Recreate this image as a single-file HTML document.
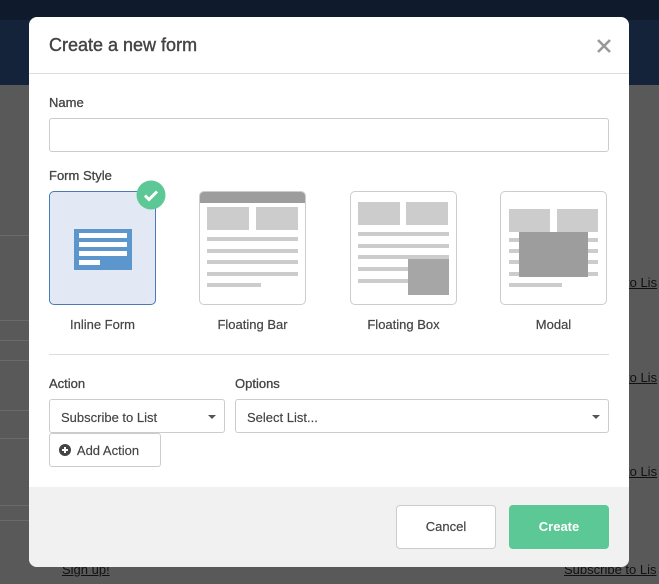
<!DOCTYPE html>
<html><head><style>
*{box-sizing:border-box;margin:0;padding:0}
body{width:659px;height:584px;overflow:hidden;position:relative;background:#595959;font-family:"Liberation Sans",sans-serif;}
.top{position:absolute;left:0;top:0;width:659px;height:85px;background:#14223a}
.top2{position:absolute;left:0;top:0;width:659px;height:20px;background:#0f1a2c}
.bgl{position:absolute;left:0;width:40px;height:1px;background:#6a6a6a}
.lnk{position:absolute;color:#111;font-size:13px;text-decoration:underline}
.modal{position:absolute;left:29px;top:17px;width:600px;height:550px;background:#fff;border-radius:8px;overflow:hidden}
.hdr{height:57px;border-bottom:1px solid #ddd;position:relative}
.hdr h1{position:absolute;left:20px;top:18px;font-size:18px;font-weight:normal;color:#444;-webkit-text-stroke:.4px #444}
.x{position:absolute;left:567px;top:21px}
.lbl{position:absolute;font-size:13px;color:#444;-webkit-text-stroke:.3px #444}
.inp{position:absolute;border:1px solid #ccc;border-radius:3px;background:#fff}
.card{position:absolute;top:174px;width:107px;height:114px;border:1px solid #ccc;border-radius:5px;background:#fff;overflow:hidden}
.cl{position:absolute;top:300px;font-size:13px;color:#444;text-align:center;width:107px;-webkit-text-stroke:.2px #444}
.g{position:absolute;background:#ccc}
.d{position:absolute;background:#9d9d9d}
.footer{position:absolute;left:0;top:470px;width:600px;height:80px;background:#f1f1f1}
.sel{font-size:13px;color:#444;padding:10px 11px;-webkit-text-stroke:.15px #444}
.caret{position:absolute;right:8px;top:15px;border-left:4px solid transparent;border-right:4px solid transparent;border-top:4px solid #555}
</style></head><body>
<div class="top"></div><div class="top2"></div>
<div class="bgl" style="top:235px"></div><div class="bgl" style="top:320px"></div><div class="bgl" style="top:340px"></div><div class="bgl" style="top:360px"></div><div class="bgl" style="top:410px"></div><div class="bgl" style="top:438px"></div><div class="bgl" style="top:505px"></div><div class="bgl" style="top:520px"></div>
<div class="lnk" style="left:626px;top:275px">to Lis</div>
<div class="lnk" style="left:626px;top:370px">to Lis</div>
<div class="lnk" style="left:626px;top:464px">to Lis</div>
<div class="lnk" style="left:564px;top:562px">Subscribe to Lis</div>
<div class="lnk" style="left:62px;top:562px">Sign up!</div>
<div class="modal">
<div class="hdr"><h1>Create a new form</h1>
<svg class="x" width="16" height="16" viewBox="0 0 16 16"><path d="M2 2L14 14M14 2L2 14" stroke="#999" stroke-width="2.6"/></svg></div>
<div class="lbl" style="left:20px;top:78px">Name</div>
<div class="inp" style="left:20px;top:101px;width:560px;height:34px"></div>
<div class="lbl" style="left:20px;top:151px">Form Style</div>
<div class="card" style="left:20px;background:#e2e9f4;border-color:#4a7ab8"><div style="position:absolute;left:24px;top:37px;width:58px;height:41px;background:#5b96cc"></div>
<div style="position:absolute;left:29px;top:41px;width:48px;height:5px;background:#fff"></div><div style="position:absolute;left:29px;top:50px;width:48px;height:5px;background:#fff"></div><div style="position:absolute;left:29px;top:59px;width:48px;height:5px;background:#fff"></div><div style="position:absolute;left:29px;top:68px;width:21px;height:5px;background:#fff"></div></div>
<svg style="position:absolute;left:107px;top:163px" width="30" height="30"><circle cx="15" cy="15" r="14.5" fill="#5cc896"/><path d="M9 15.5l4 4 8-8" stroke="#fff" stroke-width="3" fill="none"/></svg>
<div class="card" style="left:170px"><div class="d" style="left:0;top:0;width:107px;height:11px"></div>
<div class="g" style="left:7px;top:15px;width:42px;height:23px"></div><div class="g" style="left:56px;top:15px;width:42px;height:23px"></div>
<div class="g" style="left:7px;top:45px;width:91px;height:4px"></div><div class="g" style="left:7px;top:57px;width:91px;height:4px"></div><div class="g" style="left:7px;top:68px;width:91px;height:4px"></div><div class="g" style="left:7px;top:80px;width:91px;height:4px"></div><div class="g" style="left:7px;top:91px;width:54px;height:4px"></div></div>
<div class="card" style="left:321px"><div class="g" style="left:7px;top:10px;width:42px;height:23px"></div><div class="g" style="left:55px;top:10px;width:42px;height:23px"></div>
<div class="g" style="left:7px;top:40px;width:91px;height:4px"></div><div class="g" style="left:7px;top:52px;width:91px;height:4px"></div><div class="g" style="left:7px;top:63px;width:91px;height:4px"></div><div class="g" style="left:7px;top:75px;width:91px;height:4px"></div><div class="g" style="left:7px;top:87px;width:91px;height:4px"></div>
<div style="position:absolute;left:57px;top:67px;width:41px;height:36px;background:#a6a6a6"></div></div>
<div class="card" style="left:471px"><div class="g" style="left:8px;top:17px;width:41px;height:23px"></div><div class="g" style="left:56px;top:17px;width:41px;height:23px"></div>
<div class="g" style="left:8px;top:46px;width:89px;height:4px"></div><div class="g" style="left:8px;top:57px;width:89px;height:4px"></div><div class="g" style="left:8px;top:68px;width:89px;height:4px"></div><div class="g" style="left:8px;top:80px;width:89px;height:4px"></div><div class="g" style="left:8px;top:91px;width:53px;height:4px"></div>
<div class="d" style="left:18px;top:40px;width:69px;height:45px"></div></div>
<div class="cl" style="left:20px">Inline Form</div><div class="cl" style="left:170px">Floating Bar</div><div class="cl" style="left:321px">Floating Box</div><div class="cl" style="left:471px">Modal</div>
<div style="position:absolute;left:20px;top:337px;width:560px;height:1px;background:#ddd"></div>
<div class="lbl" style="left:20px;top:359px">Action</div>
<div class="lbl" style="left:206px;top:359px">Options</div>
<div class="inp sel" style="left:20px;top:382px;width:176px;height:34px">Subscribe to List<span class="caret"></span></div>
<div class="inp sel" style="left:206px;top:382px;width:374px;height:34px">Select List...<span class="caret"></span></div>
<div class="inp sel" style="left:20px;top:416px;width:112px;height:34px;padding:9px 9px;font-size:13px"><svg width="12" height="12" style="vertical-align:-1px;margin-right:3px"><circle cx="6" cy="6" r="6" fill="#444"/><path d="M6 3v6M3 6h6" stroke="#fff" stroke-width="2"/></svg> Add Action</div>
<div class="footer">
<div style="position:absolute;left:367px;top:18px;width:100px;height:44px;background:#fff;border:1px solid #ccc;border-radius:4px;text-align:center;line-height:42px;font-size:13px;color:#444;-webkit-text-stroke:.2px #444">Cancel</div>
<div style="position:absolute;left:480px;top:18px;width:100px;height:44px;background:#5cc896;border-radius:4px;text-align:center;line-height:44px;font-size:13px;color:#fff;font-weight:bold">Create</div>
</div>
</div>
</body></html>
